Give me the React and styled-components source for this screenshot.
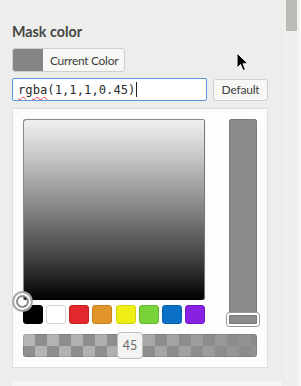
import React from "react";
import styled, { createGlobalStyle } from "styled-components";

const Global = createGlobalStyle`
  html, body { margin: 0; padding: 0; background: #edeeeb; }
  body { font-family: "Lato", "Liberation Sans", sans-serif; overflow: hidden; }
`;

const Page = styled.div`
  position: relative;
  display: flex;
  width: 301px;
  height: 386px;
  overflow: hidden;
  background: #edeeeb;
`;

const Content = styled.div`
  flex: 1;
  display: flex;
  flex-direction: column;
  padding: 23px 0 0 12px;
`;

const Title = styled.h2`
  margin: 0 0 7px;
  font-size: 14.3px;
  line-height: 18px;
  font-weight: 700;
  color: #454543;
`;

const Row = styled.div`
  display: flex;
  align-items: ${(p) => p.$align || "center"};
  gap: ${(p) => p.$gap || 0}px;
  margin-bottom: ${(p) => p.$mb || 0}px;
`;

const ColorButton = styled.button`
  display: flex;
  align-items: center;
  box-sizing: border-box;
  height: 24px;
  width: 113px;
  padding: 0;
  border: 1px solid #cfd0cc;
  border-radius: 3px;
  background: #f7f7f5;
  overflow: hidden;
  white-space: nowrap;
  font: inherit;
  font-size: 12px;
  letter-spacing: -0.3px;
  color: #3f3f3e;
`;

const Swatch = styled.span`
  flex: none;
  width: 30px;
  height: 100%;
  background: ${(p) => p.$c};
  margin-right: 7px;
`;

const TextField = styled.div`
  box-sizing: border-box;
  width: 195px;
  height: 23px;
  border: 1px solid #5a98dc;
  border-radius: 2px;
  background: #fff;
  padding: 0 0 0 5px;
  display: flex;
  align-items: center;
  font-family: "DejaVu Sans Mono", "Liberation Mono", monospace;
  font-size: 12.2px;
  color: #2b2b2b;
  white-space: pre;
`;

const Misspelled = styled.span`
  text-decoration: underline wavy #e33;
  text-decoration-thickness: 1px;
  text-underline-offset: 2px;
`;

const Caret = styled.span`
  display: inline-block;
  width: 1px;
  height: 15px;
  background: #222;
  margin-left: 1px;
`;

const PlainButton = styled.button`
  box-sizing: border-box;
  width: 55px;
  height: 22px;
  padding: 0;
  border: 1px solid #cfd0cc;
  border-radius: 3px;
  background: #f7f7f5;
  white-space: nowrap;
  font: inherit;
  font-size: 12px;
  letter-spacing: -0.2px;
  color: #3f3f3e;
`;

const Panel = styled.div`
  box-sizing: border-box;
  width: 256px;
  height: 260px;
  border: 1px solid #dcddd9;
  background: #fdfdfc;
  padding: 10px;
  display: flex;
  flex-direction: column;
  gap: 7px;
`;

const PickerTop = styled.div`
  display: flex;
  justify-content: space-between;
`;

const LeftCol = styled.div`
  display: flex;
  flex-direction: column;
  gap: 5px;
  width: 182px;
`;

const SatArea = styled.div`
  position: relative;
  height: 181px;
  border-radius: 3px;
  background: linear-gradient(to bottom, #f1f1ef 0%, #c4c4c2 22%, #848482 50%, #3e3e3d 78%, #000 100%);
  box-shadow: inset 1px 1px 0 #8a8a88, inset -1px 0 0 #777, 0 0 1px rgba(0,0,0,0.3);
`;

const Marker = styled.span`
  position: absolute;
  left: -11px;
  bottom: -12px;
  box-sizing: border-box;
  width: 21px;
  height: 21px;
  border-radius: 50%;
  border: 2px solid #a8a8a6;
  box-shadow: inset 0 0 0 2px #fff, inset 0 0 0 4px #8c8c8a;
`;

const Swatches = styled.div`
  display: flex;
  justify-content: space-between;
`;

const ColorChip = styled.span`
  box-sizing: border-box;
  width: 20px;
  height: 19px;
  border-radius: 3px;
  background: ${(p) => p.$c};
  border: 1px solid ${(p) => p.$b};
`;

const VBar = styled.div`
  position: relative;
  width: 28px;
  height: 208px;
  border-radius: 3px;
  background: #8b8c89;
  box-shadow: inset 0 0 0 1px #7a7b78;
`;

const VHandle = styled.span`
  position: absolute;
  left: -2px;
  top: 194px;
  box-sizing: border-box;
  width: 32px;
  height: 13px;
  border: 2px solid #fff;
  border-radius: 3px;
  box-shadow: 0 0 0 1px #9a9b98, inset 0 0 0 1px #777;
`;

const AlphaTrack = styled.div`
  position: relative;
  height: 24px;
  border-radius: 3px;
  background:
    linear-gradient(to right, rgba(140,140,138,0) 0%, rgba(140,140,138,0.2) 45%, rgba(140,140,138,0.9) 100%),
    conic-gradient(#8e8e8c 25%, #b6b6b4 0 50%, #8e8e8c 0 75%, #b6b6b4 0) 0 0 / 24px 24px;
  box-shadow: inset 0 0 0 1px rgba(0,0,0,0.1);
`;

const AlphaHandle = styled.span`
  position: absolute;
  left: 94px;
  top: -2px;
  box-sizing: border-box;
  width: 26px;
  height: 27px;
  border: 1px solid #bdbdbb;
  border-radius: 4px;
  background: #f4f4f2;
  display: flex;
  align-items: center;
  justify-content: center;
  font-size: 12.5px;
  color: #6a6a68;
`;

const NextBox = styled.div`
  margin-top: 13px;
  width: 270px;
  height: 10px;
  background: #f5f6f3;
`;

const Scrollbar = styled.div`
  width: 15px;
  background: #eff0ed;
  border-right: 2px solid #f7f7f5;
  display: flex;
  justify-content: center;
`;

const Thumb = styled.span`
  width: 11px;
  height: 31px;
  background: #b9bcb5;
`;

const Cursor = styled.svg`
  position: absolute;
  left: 236px;
  top: 52px;
`;

const chips = [
  ["#000", "#000"],
  ["#fff", "#d3d3d1"],
  ["#e2282c", "#c42226"],
  ["#e19528", "#c98120"],
  ["#eeed14", "#d4d30f"],
  ["#7ad23a", "#69b830"],
  ["#0b71c6", "#0a63ae"],
  ["#8722e2", "#741cc4"],
];

export default function App() {
  return (
    <Page>
      <Global />
      <Content>
        <Title>Mask color</Title>
        <Row $mb={6}>
          <ColorButton>
            <Swatch $c="#858684" />
            Current Color
          </ColorButton>
        </Row>
        <Row $gap={6} $mb={7}>
          <TextField>
            <Misspelled>rgba</Misspelled>(1,1,1,0.45)<Caret />
          </TextField>
          <PlainButton>Default</PlainButton>
        </Row>
        <Panel>
          <PickerTop>
            <LeftCol>
              <SatArea>
                <Marker />
              </SatArea>
              <Swatches>
                {chips.map(([c, b]) => (
                  <ColorChip key={c} $c={c} $b={b} />
                ))}
              </Swatches>
            </LeftCol>
            <VBar>
              <VHandle />
            </VBar>
          </PickerTop>
          <AlphaTrack>
            <AlphaHandle>45</AlphaHandle>
          </AlphaTrack>
        </Panel>
        <NextBox />
      </Content>
      <Scrollbar>
        <Thumb />
      </Scrollbar>
      <Cursor width="14" height="20" viewBox="0 0 14 20">
        <path d="M1 1 L1 16 L4.5 12.5 L7 18.5 L9.5 17.5 L7 11.8 L12 11.8 Z" fill="#000" stroke="#fff" strokeWidth="1" strokeLinejoin="round" />
      </Cursor>
    </Page>
  );
}
